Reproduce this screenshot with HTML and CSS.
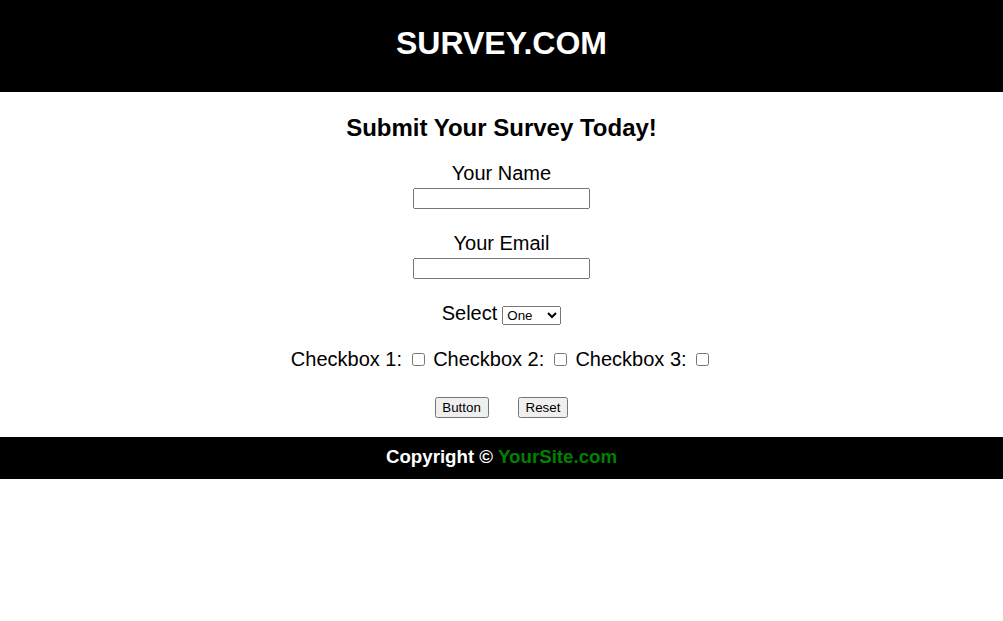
FILE: index.html
```html
<!DOCTYPE html>
<html lang="en">
<head>
<meta charset="utf-8">
<title>Survey.com</title>
<link rel="stylesheet" href="styles.css">
</head>
<body>
<header class="site-header">
  <h1 class="site-title">SURVEY.COM</h1>
</header>
<main class="survey">
  <h2 class="survey-title">Submit Your Survey Today!</h2>
  <form class="survey-form">
    <div class="field">
      <label class="field-label" for="name">Your Name</label>
      <input class="text-input" type="text" id="name">
    </div>
    <div class="field">
      <label class="field-label" for="email">Your Email</label>
      <input class="text-input" type="email" id="email">
    </div>
    <div class="row">
      <label for="choice">Select</label><select class="select" id="choice">
        <option>One</option>
        <option>Two</option>
        <option>Three</option>
      </select>
    </div>
    <div class="row">
      <label for="c1">Checkbox 1:</label> <input class="check" type="checkbox" id="c1">
      <label for="c2">Checkbox 2:</label> <input class="check" type="checkbox" id="c2">
      <label for="c3">Checkbox 3:</label> <input class="check" type="checkbox" id="c3">
    </div>
    <div class="buttons">
      <button class="btn btn-main" type="button">Button</button>
      <button class="btn" type="reset">Reset</button>
    </div>
  </form>
</main>
<footer class="site-footer">
  Copyright &copy; <span class="brand">YourSite.com</span>
</footer>
</body>
</html>
```
FILE: styles.css
```css
html, body {
  margin: 0;
  padding: 0;
  background: #fff;
  font-family: "Liberation Sans", Arial, sans-serif;
  color: #000;
}

.site-header {
  background: #000;
  height: 92px;
  box-sizing: border-box;
  padding-top: 25px;
  text-align: center;
}

.site-title {
  margin: 0;
  color: #fff;
  font-size: 32px;
  line-height: 37px;
  font-weight: bold;
}

.survey {
  text-align: center;
  padding: 22px 0 19px;
}

.survey-title {
  margin: 0 0 20px;
  font-size: 24px;
  line-height: 28px;
  font-weight: bold;
}

.survey-form {
  display: flex;
  flex-direction: column;
  align-items: center;
  gap: 23px;
  font-size: 20px;
  line-height: 23px;
}

.field {
  display: flex;
  flex-direction: column;
  align-items: center;
  gap: 3px;
}

.field-label {
  display: block;
}

.text-input {
  width: 177px;
  height: 21px;
  box-sizing: border-box;
  margin: 0;
  font-family: "Liberation Sans", Arial, sans-serif;
  font-size: 13.33px;
}

.row {
  height: 23px;
}

.select {
  width: 59px;
  height: 19px;
  margin-left: 5px;
  font-family: "Liberation Sans", Arial, sans-serif;
  font-size: 13.33px;
  vertical-align: baseline;
}

.check {
  margin: 3px 3px 3px 4px;
}

.buttons {
  display: flex;
  gap: 29px;
  margin-top: 3px;
}

.btn {
  font-family: "Liberation Sans", Arial, sans-serif;
  font-size: 13.33px;
  margin: 0;
}

.btn-main {
  width: 54px;
  padding: 1px 0;
}

.site-footer {
  background: #000;
  color: #fff;
  height: 42px;
  box-sizing: border-box;
  padding-top: 9px;
  text-align: center;
  font-size: 18.7px;
  line-height: 21px;
  font-weight: bold;
}

.brand {
  color: #008000;
}
```
